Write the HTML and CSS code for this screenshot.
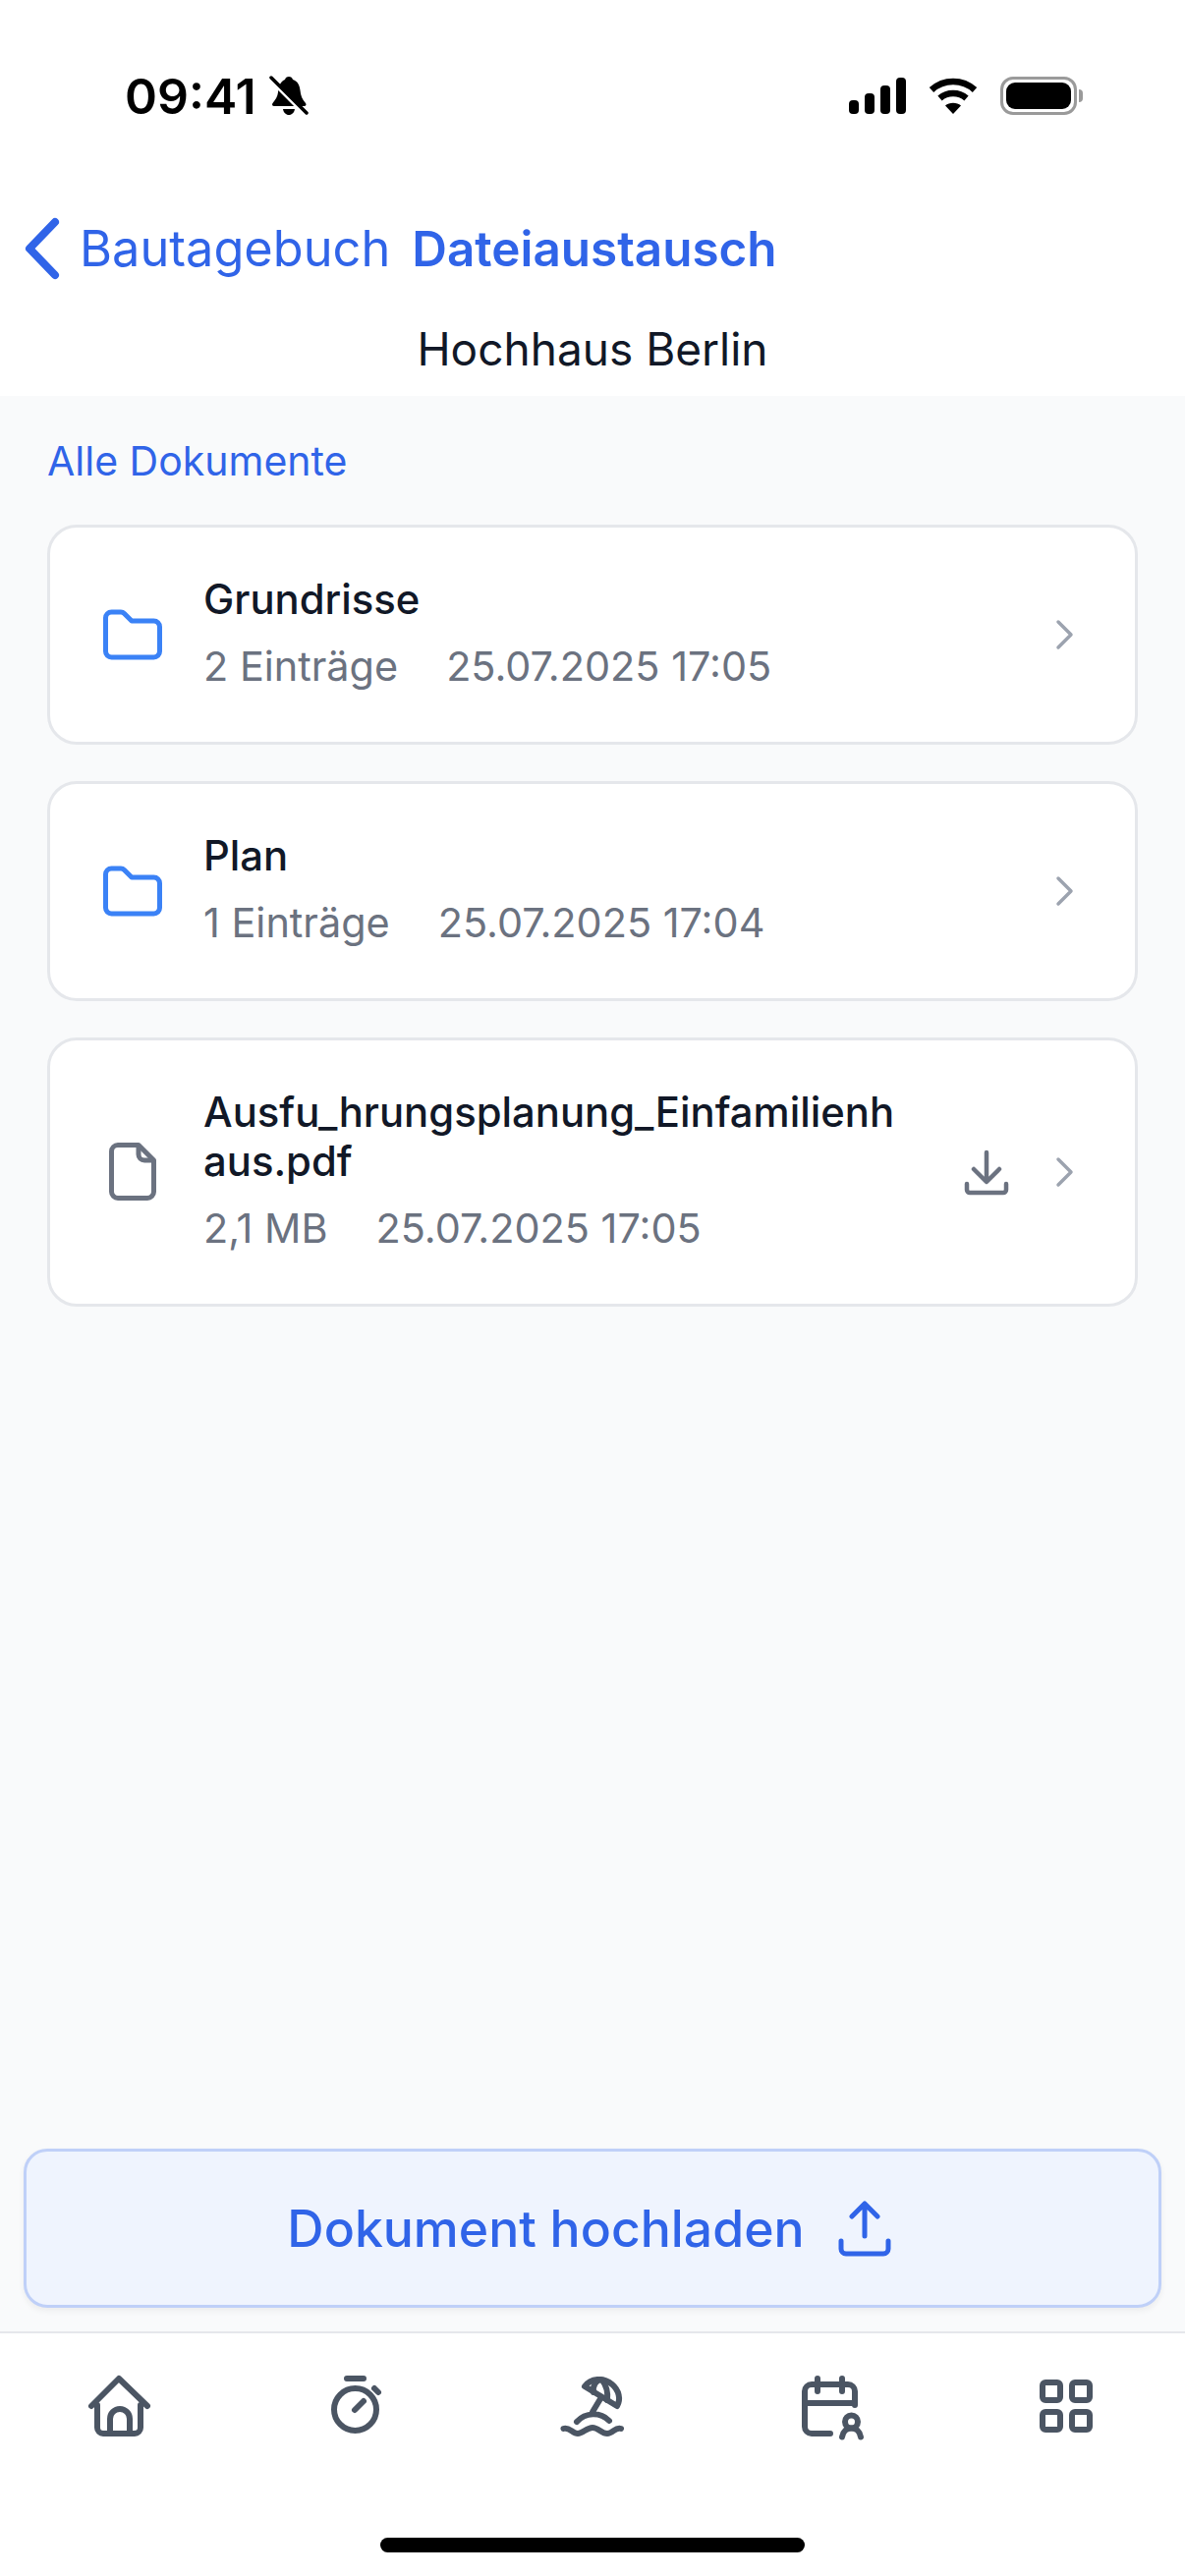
FILE: index.html
```html
<!DOCTYPE html>
<html lang="de">
<head>
    <meta charset="UTF-8">
    <meta content="width=device-width, initial-scale=1.0" name="viewport">
    <title>Dateiaustausch</title>
    <link rel="stylesheet" href="styles.css">
</head>
<body>
<div class="phone">
    <header class="top">
        <div class="status-bar">
            <div class="status-left">
                <span class="time">09:41</span>
                <svg class="bell" width="40" height="44" viewBox="0 0 40 44">
                    <path d="M20 2c2 0 3.500 1.200 4 3 5 1.500 7 6 7.500 11 .4 5 2 9 5.500 13 1 1.500.5 3-1.500 3H5c-2 0-2.500-1.500-1.500-3 3-3.500 5-7 5.500-11 .5-7 3-11.500 7-13 .5-2 2-3 4-3z"/>
                    <path d="M14 35h12c-.5 3.500-3 6-6 6s-5.500-2.500-6-6z"/>
                    <path class="bell-gap" d="M1 5l35 35"/>
                    <path class="bell-slash" d="M2 3l36 36"/>
                </svg>
            </div>
            <div class="status-right">
                <svg width="58" height="38" viewBox="0 0 58 38">
                    <rect x="0" y="23" width="10" height="14" rx="4"/>
                    <rect x="16" y="16" width="10" height="21" rx="4"/>
                    <rect x="32" y="8" width="10" height="29" rx="4"/>
                    <rect x="48" y="0" width="10" height="37" rx="4"/>
                </svg>
                <svg class="wifi" width="50" height="38" viewBox="0 0 50 38">
                    <path class="wifi-arc" d="M3 12.500C9 7 16.500 4 25 4s16 3 22 8.500"/>
                    <path class="wifi-arc" d="M11.500 21c4-3.500 8.500-5 13.500-5s9.500 1.500 13.500 5"/>
                    <path d="M25 37l-8-8.500c2-1.800 5-2.700 8-2.700s6 .9 8 2.700z"/>
                </svg>
                <div class="battery"><span class="battery-fill"></span></div>
            </div>
        </div>
        <nav class="nav-row">
            <svg class="back-icon" width="40" height="64" viewBox="0 0 40 64">
                <path d="M33 5L7 32l26 27"/>
            </svg>
            <span class="back-label">Bautagebuch</span>
            <span class="nav-title">Dateiaustausch</span>
        </nav>
        <div class="project-name">Hochhaus Berlin</div>
    </header>

    <main class="content">
        <div class="breadcrumb">Alle Dokumente</div>

        <div class="file-list">
            <div class="file-card">
                <svg class="item-icon folder" width="72" height="72" viewBox="0 0 72 72">
                    <path d="M8.500 19a6 6 0 0 1 6-6H24a5 5 0 0 1 3.500 1.500L35 22h22.500a6 6 0 0 1 6 6v25a6 6 0 0 1-6 6h-43a6 6 0 0 1-6-6z"/>
                </svg>
                <div class="file-info">
                    <div class="file-name">Grundrisse</div>
                    <div class="file-meta"><span>2 Einträge</span><span>25.07.2025 17:05</span></div>
                </div>
                <svg class="chevron" width="24" height="36" viewBox="0 0 24 36">
                    <path d="M5 5l13 13L5 31"/>
                </svg>
            </div>

            <div class="file-card">
                <svg class="item-icon folder" width="72" height="72" viewBox="0 0 72 72">
                    <path d="M8.500 19a6 6 0 0 1 6-6H24a5 5 0 0 1 3.500 1.500L35 22h22.500a6 6 0 0 1 6 6v25a6 6 0 0 1-6 6h-43a6 6 0 0 1-6-6z"/>
                </svg>
                <div class="file-info">
                    <div class="file-name">Plan</div>
                    <div class="file-meta"><span>1 Einträge</span><span>25.07.2025 17:04</span></div>
                </div>
                <svg class="chevron" width="24" height="36" viewBox="0 0 24 36">
                    <path d="M5 5l13 13L5 31"/>
                </svg>
            </div>

            <div class="file-card">
                <svg class="item-icon doc" width="72" height="72" viewBox="0 0 72 72">
                    <path d="M14.500 15a6.500 6.500 0 0 1 6.500-6.500h21L57.500 24v32a6.500 6.500 0 0 1-6.500 6.500H21a6.500 6.500 0 0 1-6.500-6.500z"/>
                    <path d="M42 9v9a6 6 0 0 0 6 6h9"/>
                </svg>
                <div class="file-info">
                    <div class="file-name">Ausfu_hrungsplanung_Einfamilienhaus.pdf</div>
                    <div class="file-meta"><span>2,1 MB</span><span>25.07.2025 17:05</span></div>
                </div>
                <svg class="download" width="48" height="48" viewBox="0 0 48 48">
                    <path d="M24 4v29M11 21l13 13 13-13M4 36v6a3 3 0 0 0 3 3h34a3 3 0 0 0 3-3v-6"/>
                </svg>
                <svg class="chevron" width="24" height="36" viewBox="0 0 24 36">
                    <path d="M5 5l13 13L5 31"/>
                </svg>
            </div>
        </div>

        <button class="upload-btn">
            <span>Dokument hochladen</span>
            <svg width="60" height="60" viewBox="0 0 60 60">
                <path d="M30 5v33M17 18L30 5l13 13M6 43v8a5 5 0 0 0 5 5h38a5 5 0 0 0 5-5v-8"/>
            </svg>
        </button>
    </main>

    <footer class="tab-bar">
        <div class="tabs">
            <svg width="72" height="72" viewBox="0 0 72 72">
                <path d="M8 36L36 8l29 28"/>
                <path d="M14 35v23a6 6 0 0 0 6 6h32a6 6 0 0 0 6-6V35"/>
                <path d="M27 64V49a10 10 0 0 1 20 0v15"/>
            </svg>
            <svg width="72" height="72" viewBox="0 0 72 72">
                <circle cx="35.500" cy="39.500" r="21.500"/>
                <path d="M27 8h17M35 40l9-9M55 18l4 4"/>
            </svg>
            <svg width="72" height="72" viewBox="0 0 72 72">
                <path d="M28 16C34 8 47 6 56 14c7 6 9 15 5 22z"/>
                <path d="M44 9c-5 2-8 7-7 13M46 10c4 5 6 11 5 20"/>
                <path d="M45 27l-9 15M20 52c9-10 24-10 33-1"/>
                <path d="M6.500 59c6-2 9 5 14.500 5s9-6 15-6 9 6 15 6 8-7 14-5"/>
            </svg>
            <svg width="72" height="72" viewBox="0 0 72 72">
                <path d="M62 35V21a7 7 0 0 0-7-7H18a7 7 0 0 0-7 7v36a7 7 0 0 0 7 7h19"/>
                <path d="M24 8v13M49 8v13M11 33h51"/>
                <circle cx="58.500" cy="52" r="6.500"/>
                <path d="M49 67.500c1-6 5-9 9.500-9s8.500 3 9.500 9"/>
            </svg>
            <svg width="72" height="72" viewBox="0 0 72 72">
                <rect x="12" y="12" width="18" height="18" rx="3"/>
                <rect x="42" y="12" width="18" height="18" rx="3"/>
                <rect x="12" y="42" width="18" height="18" rx="3"/>
                <rect x="42" y="42" width="18" height="18" rx="3"/>
            </svg>
        </div>
        <div class="home-indicator"></div>
    </footer>
</div>
</body>
</html>
```

FILE: styles.css
```css
* {
    box-sizing: border-box;
}

body {
    margin: 0;
    font-family: Inter, "Noto Sans", sans-serif;
    background: #f9fafb;
    color: #111827;
}

svg {
    display: block;
    flex: none;
}

.phone {
    width: 1206px;
    height: 2622px;
    display: flex;
    flex-direction: column;
    overflow: hidden;
}

/* header */
.top {
    height: 403px;
    background: white;
}

.status-bar {
    height: 217px;
    padding: 76px 110px 0 127px;
    display: flex;
    justify-content: space-between;
    align-items: flex-start;
}

.status-left {
    display: flex;
    align-items: center;
    gap: 13px;
}

.time {
    font-size: 50px;
    font-weight: 600;
    line-height: 44px;
    color: #000;
}

.bell path {
    fill: #000;
}

.bell .bell-gap {
    fill: none;
    stroke: white;
    stroke-width: 4px;
}

.bell .bell-slash {
    fill: none;
    stroke: #000;
    stroke-width: 3.500px;
    stroke-linecap: round;
}

.status-right {
    display: flex;
    gap: 23px;
    padding-top: 3px;
}

.wifi-arc {
    fill: none;
    stroke: #000;
    stroke-width: 6.500px;
}

.battery {
    width: 78px;
    height: 39px;
    margin-top: -1px;
    padding: 3px;
    border: 3px solid #9a9a9a;
    border-radius: 13px;
    position: relative;
}

.battery::after {
    content: "";
    position: absolute;
    right: -9px;
    top: 10px;
    width: 4px;
    height: 13px;
    background: #9a9a9a;
    border-radius: 0 4px 4px 0;
}

.battery-fill {
    display: block;
    height: 100%;
    background: #000;
    border-radius: 9px;
}

.nav-row {
    display: flex;
    align-items: center;
    height: 72px;
    padding-left: 23px;
    color: #3064e8;
    line-height: 72px;
}

.back-icon path {
    fill: none;
    stroke: #3064e8;
    stroke-width: 8px;
    stroke-linecap: round;
    stroke-linejoin: round;
}

.back-label {
    margin-left: 18px;
    font-size: 50.500px;
}

.nav-title {
    margin-left: 22px;
    font-size: 49.400px;
    font-weight: 600;
}

.project-name {
    margin-top: 38px;
    text-align: center;
    font-size: 46px;
    line-height: 56px;
}

/* list */
.content {
    flex: 1;
    display: flex;
    flex-direction: column;
    padding: 0 24px 24px;
}

.breadcrumb {
    padding: 41px 24px 0;
    color: #3064e8;
    font-size: 41px;
    line-height: 50px;
}

.file-list {
    flex: 1;
    display: flex;
    flex-direction: column;
    gap: 37px;
    margin: 40px 24px 0;
}

.file-card {
    display: flex;
    align-items: center;
    padding: 50px 48px;
    background: white;
    border: 3px solid #e5e7eb;
    border-radius: 30px;
}

.file-info {
    flex: 1;
    min-width: 0;
    margin-left: 36px;
    margin-right: 60px;
    overflow-wrap: anywhere;
    position: relative;
    top: -2px;
}

.file-name {
    font-size: 41.800px;
    font-weight: 500;
    line-height: 50px;
}

.file-meta {
    display: flex;
    gap: 49px;
    margin-top: 18px;
    color: #6b7280;
    font-size: 41.400px;
    line-height: 50px;
}

.folder path {
    fill: none;
    stroke: #3b82f6;
    stroke-width: 5px;
    stroke-linejoin: round;
}

.doc path {
    fill: none;
    stroke: #6b7280;
    stroke-width: 5px;
    stroke-linejoin: round;
}

.download {
    margin-right: 44px;
}

.download path {
    fill: none;
    stroke: #6b7280;
    stroke-width: 4.500px;
    stroke-linecap: round;
    stroke-linejoin: round;
}

.chevron {
    margin-right: 11px;
}

.chevron path {
    fill: none;
    stroke: #9ca3af;
    stroke-width: 3.500px;
    stroke-linecap: round;
    stroke-linejoin: round;
}

.upload-btn {
    height: 162px;
    padding: 0 4px 0 0;
    display: flex;
    align-items: center;
    justify-content: center;
    gap: 31px;
    background: #eff4fe;
    border: 3px solid #bfd0f8;
    border-radius: 24px;
    box-shadow: 0 3px 6px rgba(0, 0, 0, 0.06);
    color: #3064e8;
    font-family: inherit;
    font-size: 51.700px;
    font-weight: 500;
}

.upload-btn path {
    fill: none;
    stroke: #3064e8;
    stroke-width: 5px;
    stroke-linecap: round;
    stroke-linejoin: round;
}

/* bottom tabs */
.tab-bar {
    height: 249px;
    background: white;
    border-top: 2px solid #e5e7eb;
    position: relative;
}

.tabs {
    display: grid;
    grid-template-columns: repeat(5, 1fr);
    justify-items: center;
    padding-top: 38px;
}

.tabs svg * {
    fill: none;
    stroke: #4b5563;
    stroke-width: 6px;
    stroke-linecap: round;
    stroke-linejoin: round;
}

.home-indicator {
    position: absolute;
    left: 387px;
    bottom: 24px;
    width: 432px;
    height: 15px;
    background: #000;
    border-radius: 8px;
}
```
